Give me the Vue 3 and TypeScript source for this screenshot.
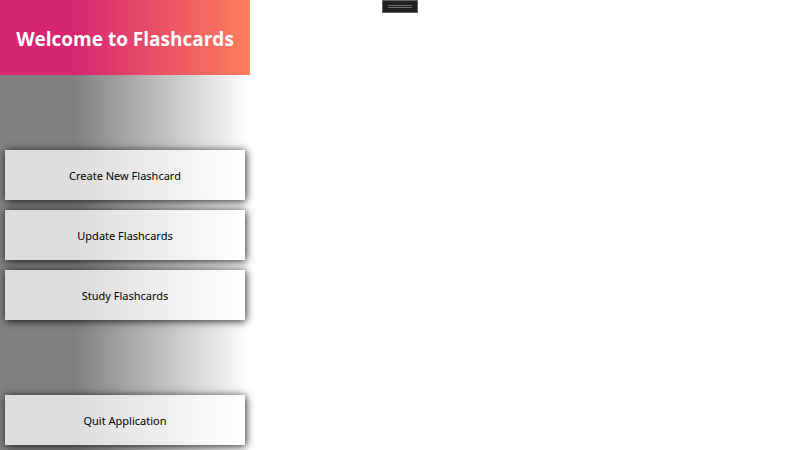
<script setup lang="ts">
const actions: string[] = ['Create New Flashcard', 'Update Flashcards', 'Study Flashcards']
</script>

<template>
  <div class="window">
    <aside class="sidebar">
      <header class="banner"><h1>Welcome to Flashcards</h1></header>
      <nav class="menu">
        <button v-for="action in actions" :key="action" type="button" class="card">{{ action }}</button>
      </nav>
      <button type="button" class="card">Quit Application</button>
    </aside>
    <main class="content"></main>
    <div class="handle">
      <svg width="36" height="13" viewBox="0 0 36 13" aria-hidden="true">
        <rect x="0.5" y="0.5" width="35" height="12" fill="#1f1f1f" stroke="#646464" />
        <path d="M6 5.5H30M6 7.5H30" stroke="#707070" />
      </svg>
    </div>
  </div>
</template>

<style>
body {
  margin: 0;
  background: #fff;
}
</style>

<style scoped>
.window {
  position: relative;
  display: flex;
  min-height: 100vh;
  overflow: hidden;
  font-family: "Open Sans", "Noto Sans", sans-serif;
}
.sidebar {
  display: flex;
  flex-direction: column;
  flex: 0 0 250px;
  box-sizing: border-box;
  padding-bottom: 5px;
  background: linear-gradient(90deg, #808080 30%, #fff 100%);
}
.banner {
  display: flex;
  align-items: center;
  justify-content: center;
  box-sizing: border-box;
  height: 75px;
  padding-top: 2px;
  background: linear-gradient(90deg, #d62671 30%, #ff7f5c 100%);
}
h1 {
  margin: 0;
  color: #fff;
  font-size: 19px;
  font-weight: 700;
  line-height: 28px;
  white-space: nowrap;
}
.menu {
  display: flex;
  flex: 1;
  flex-direction: column;
  justify-content: center;
  gap: 10px;
}
.card {
  flex: 0 0 50px;
  margin: 0 5px;
  padding: 2px 0 0;
  border: 0;
  color: #000;
  background: linear-gradient(90deg, #ddd 30%, #fff 100%);
  box-shadow: 1px 1px 8px rgba(0, 0, 0, 0.85);
  font: 11px/16px "Noto Sans", "Open Sans", sans-serif;
}
.content {
  flex: 1;
}
.handle {
  position: absolute;
  top: 0;
  left: 50%;
  margin-left: -18px;
}
.handle svg {
  display: block;
}
</style>
